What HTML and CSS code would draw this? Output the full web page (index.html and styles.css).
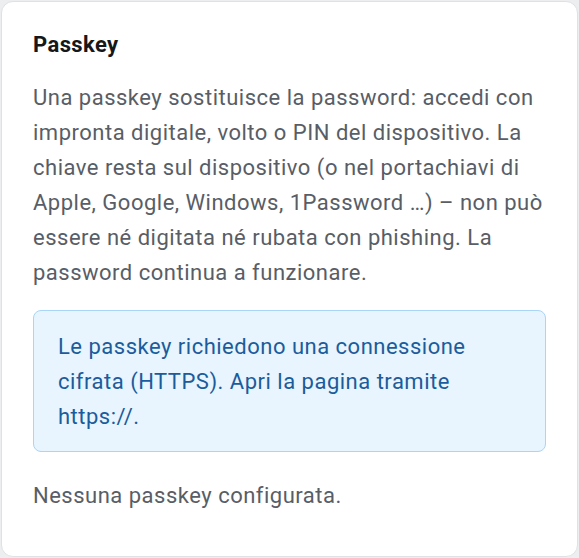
FILE: index.html
```html
<!DOCTYPE html>
<html lang="it">
<head>
<meta charset="utf-8">
<link rel="stylesheet" href="styles.css">
</head>
<body>
<section class="card">
  <h2 class="title">Passkey</h2>
  <p class="desc">Una passkey sostituisce la password: accedi con impronta digitale, volto o PIN del dispositivo. La chiave resta sul dispositivo (o nel portachiavi di Apple, Google, Windows, 1Password …) – non può essere né digitata né rubata con phishing. La password continua a funzionare.</p>
  <div class="notice">Le passkey richiedono una connessione cifrata (HTTPS). Apri la pagina tramite https://.</div>
  <p class="empty">Nessuna passkey configurata.</p>
</section>
</body>
</html>
```
FILE: styles.css
```css
html, body {
  margin: 0;
  padding: 0;
  background: #eceef0;
}
body {
  padding: 1px;
  font-family: Roboto, "Liberation Sans", sans-serif;
}
.card {
  box-sizing: border-box;
  width: 577px;
  height: 556px;
  background: #fff;
  border: 1px solid #dfe1e4;
  border-radius: 12px;
  padding: 28px 31px 0 31px;
}
.title {
  margin: 0;
  font-size: 22px;
  line-height: 30px;
  font-weight: 700;
  letter-spacing: 0.4px;
  color: #16171a;
}
.desc {
  margin: 20px 0 0 0;
  font-size: 22px;
  line-height: 35px;
  letter-spacing: 0.5px;
  color: #585d66;
}
.notice {
  margin-top: 20px;
  background: #e8f4fe;
  border: 1px solid #a9d5f6;
  border-radius: 8px;
  padding: 18px 24px 17px 24px;
  font-size: 22px;
  line-height: 35px;
  letter-spacing: 0.5px;
  color: #1b5c9c;
}
.empty {
  margin: 26px 0 0 0;
  font-size: 22px;
  line-height: 35px;
  letter-spacing: 0.5px;
  color: #585d66;
}
```
